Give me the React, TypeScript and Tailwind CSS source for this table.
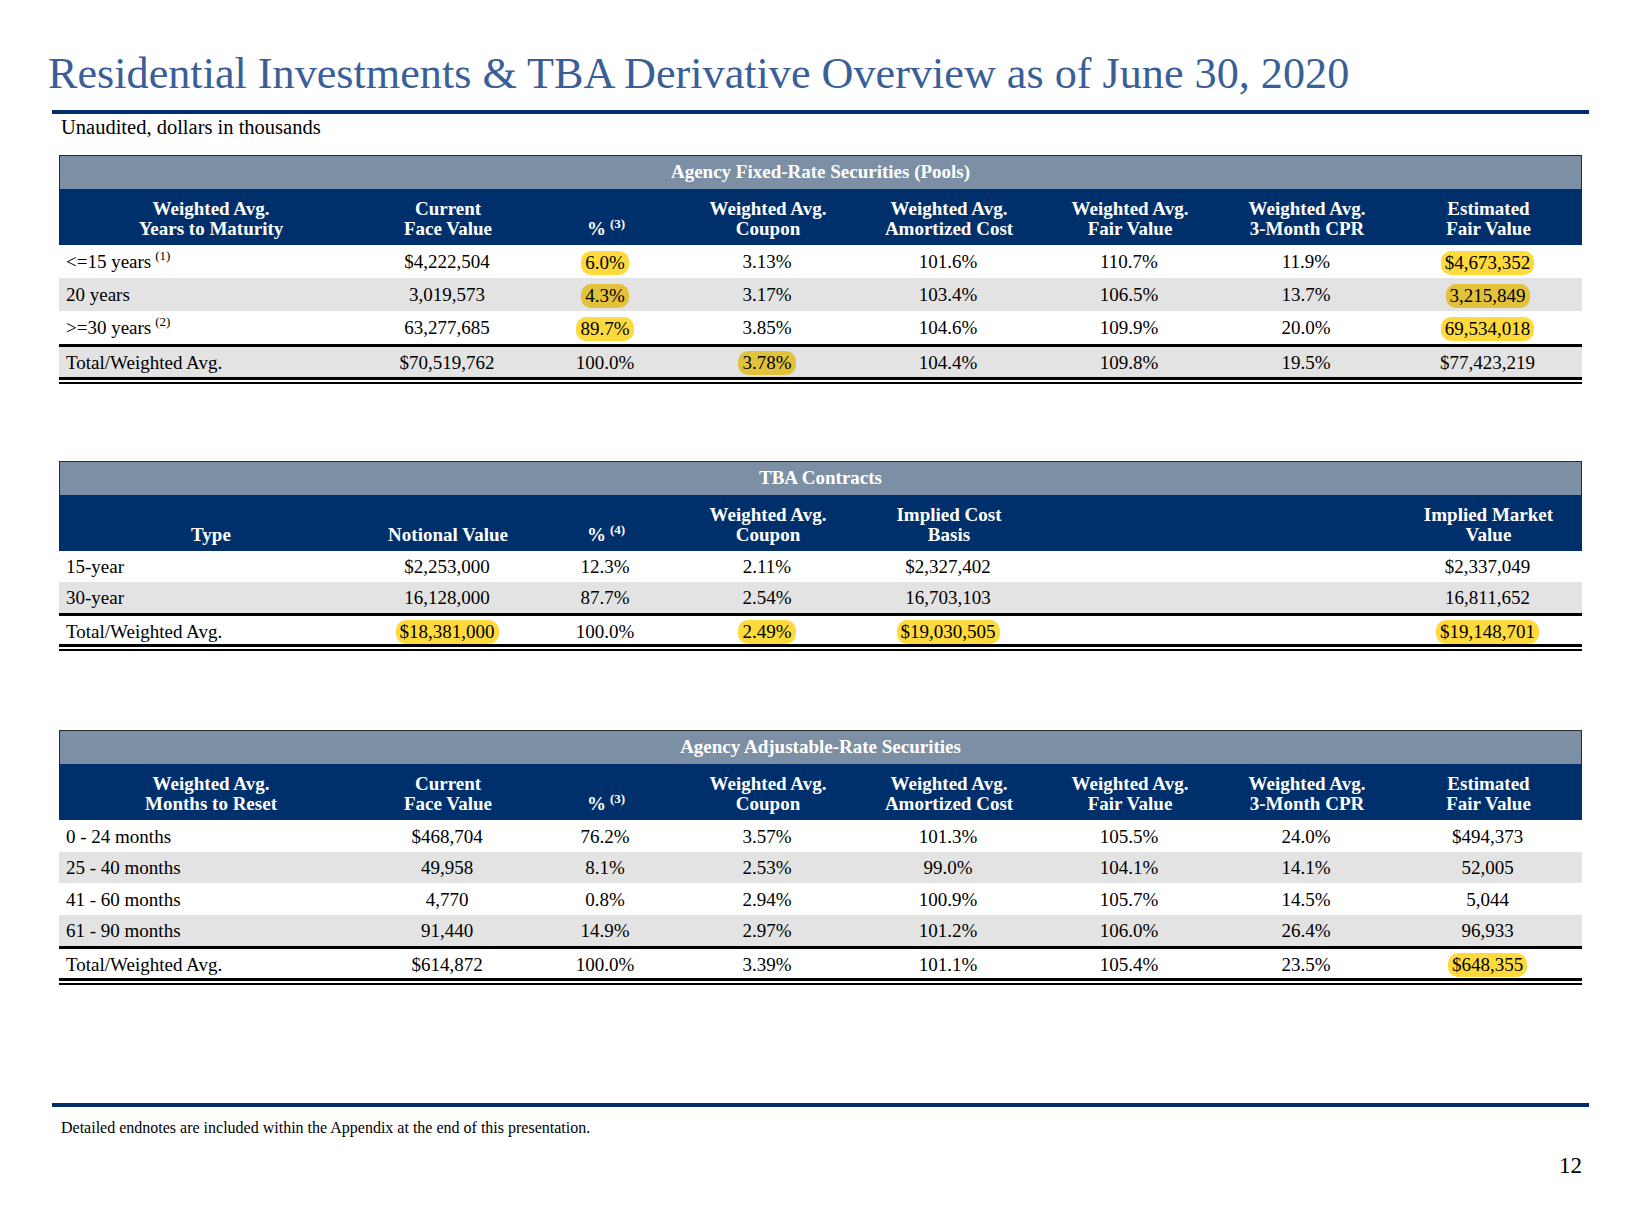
import React from 'react';

const grid = 'grid grid-cols-[302px_172px_144px_180px_182px_180px_174px_189px]';

type Cell = React.ReactNode;

const Hi: React.FC<{ dark?: boolean; children: React.ReactNode }> = ({ dark, children }) => (
  <span
    className={
      dark
        ? 'inline-block rounded-[10px] bg-[#E2C23B] px-[4px] leading-[24px]'
        : 'inline-block rounded-[10px] bg-[#FFDA3C] px-[4px] leading-[24px]'
    }
  >
    {children}
  </span>
);

const Sup: React.FC<{ children: React.ReactNode }> = ({ children }) => (
  <sup className="ml-[4px] text-[13px] top-[-7px]">{children}</sup>
);

const HeadRow: React.FC<{ labels: Cell[] }> = ({ labels }) => (
  <div className={`${grid} h-[56px] bg-[#00306B] border-x border-[#2a2a2a] text-white font-bold text-[19px] leading-[20px]`}>
    {labels.map((label, i) => (
      <div key={i} className="flex items-end justify-center text-center pb-[6px]">
        <span>{label}</span>
      </div>
    ))}
  </div>
);

const DataRow: React.FC<{ cells: Cell[]; gray?: boolean; h: string }> = ({ cells, gray, h }) => (
  <div className={`${grid} ${h} ${gray ? 'bg-[#E3E3E3]' : 'bg-white'} text-[19px] text-black`}>
    {cells.map((c, i) => (
      <div key={i} className={i === 0 ? 'flex items-center pl-[7px] pt-[2px]' : 'flex items-center justify-center pt-[2px]'}>
        {c}
      </div>
    ))}
  </div>
);

interface TableProps {
  title: string;
  headers: Cell[];
  rows: Cell[][];
  total: Cell[];
  rowH: string;
  totalH: string;
  mt: string;
}

const Table: React.FC<TableProps> = ({ title, headers, rows, total, rowH, totalH, mt }) => (
  <div className={`ml-[59px] w-[1523px] ${mt}`}>
    <div className="h-[34px] bg-[#7C8FA4] border-t border-x border-[#2a2a2a] flex items-center justify-center text-white font-bold text-[19px]">
      {title}
    </div>
    <HeadRow labels={headers} />
    {rows.map((r, i) => (
      <DataRow key={i} cells={r} gray={i % 2 === 1} h={rowH} />
    ))}
    <div className="border-t-[3px] border-black">
      <DataRow cells={total} gray={rows.length % 2 === 1} h={totalH} />
    </div>
    <div className="h-[3px] bg-black" />
    <div className="h-[2px]" />
    <div className="h-[2px] bg-black" />
  </div>
);

export default function App() {
  const two = (a: string, b: string) => (
    <>
      {a}
      <br />
      {b}
    </>
  );

  return (
    <div className="w-[1640px] h-[1206px] bg-white flex flex-col font-['Liberation_Serif',serif] overflow-hidden">
      <h1 className="ml-[48px] mt-[52px] text-[44.2px] leading-[44px] text-[#395E98] whitespace-nowrap">
        Residential Investments &amp; TBA Derivative Overview as of June 30, 2020
      </h1>
      <div className="ml-[52px] mt-[14px] w-[1537px] h-[4px] bg-[#00306B]" />
      <p className="ml-[61px] mt-[1px] text-[20.5px] leading-[24px] text-black">Unaudited, dollars in thousands</p>

      <Table
        mt="mt-[16px]"
        title="Agency Fixed-Rate Securities (Pools)"
        headers={[
          two('Weighted Avg.', 'Years to Maturity'),
          two('Current', 'Face Value'),
          <>%<Sup>(3)</Sup></>,
          two('Weighted Avg.', 'Coupon'),
          two('Weighted Avg.', 'Amortized Cost'),
          two('Weighted Avg.', 'Fair Value'),
          two('Weighted Avg.', '3-Month CPR'),
          two('Estimated', 'Fair Value'),
        ]}
        rowH="h-[33px]"
        totalH="h-[30px]"
        rows={[
          [<>&lt;=15 years<Sup>(1)</Sup></>, '$4,222,504', <Hi>6.0%</Hi>, '3.13%', '101.6%', '110.7%', '11.9%', <Hi>$4,673,352</Hi>],
          ['20 years', '3,019,573', <Hi dark>4.3%</Hi>, '3.17%', '103.4%', '106.5%', '13.7%', <Hi dark>3,215,849</Hi>],
          [<>&gt;=30 years<Sup>(2)</Sup></>, '63,277,685', <Hi>89.7%</Hi>, '3.85%', '104.6%', '109.9%', '20.0%', <Hi>69,534,018</Hi>],
        ]}
        total={['Total/Weighted Avg.', '$70,519,762', '100.0%', <Hi dark>3.78%</Hi>, '104.4%', '109.8%', '19.5%', '$77,423,219']}
      />

      <Table
        mt="mt-[77px]"
        title="TBA Contracts"
        headers={[
          'Type',
          'Notional Value',
          <>%<Sup>(4)</Sup></>,
          two('Weighted Avg.', 'Coupon'),
          two('Implied Cost', 'Basis'),
          '',
          '',
          two('Implied Market', 'Value'),
        ]}
        rowH="h-[31px]"
        totalH="h-[28px]"
        rows={[
          ['15-year', '$2,253,000', '12.3%', '2.11%', '$2,327,402', '', '', '$2,337,049'],
          ['30-year', '16,128,000', '87.7%', '2.54%', '16,703,103', '', '', '16,811,652'],
        ]}
        total={['Total/Weighted Avg.', <Hi>$18,381,000</Hi>, '100.0%', <Hi>2.49%</Hi>, <Hi>$19,030,505</Hi>, '', '', <Hi>$19,148,701</Hi>]}
      />

      <Table
        mt="mt-[79px]"
        title="Agency Adjustable-Rate Securities"
        headers={[
          two('Weighted Avg.', 'Months to Reset'),
          two('Current', 'Face Value'),
          <>%<Sup>(3)</Sup></>,
          two('Weighted Avg.', 'Coupon'),
          two('Weighted Avg.', 'Amortized Cost'),
          two('Weighted Avg.', 'Fair Value'),
          two('Weighted Avg.', '3-Month CPR'),
          two('Estimated', 'Fair Value'),
        ]}
        rowH="h-[31.5px]"
        totalH="h-[29px]"
        rows={[
          ['0 - 24 months', '$468,704', '76.2%', '3.57%', '101.3%', '105.5%', '24.0%', '$494,373'],
          ['25 - 40 months', '49,958', '8.1%', '2.53%', '99.0%', '104.1%', '14.1%', '52,005'],
          ['41 - 60 months', '4,770', '0.8%', '2.94%', '100.9%', '105.7%', '14.5%', '5,044'],
          ['61 - 90 months', '91,440', '14.9%', '2.97%', '101.2%', '106.0%', '26.4%', '96,933'],
        ]}
        total={['Total/Weighted Avg.', '$614,872', '100.0%', '3.39%', '101.1%', '105.4%', '23.5%', <Hi>$648,355</Hi>]}
      />

      {/* Footer */}
      <div className="ml-[52px] mt-[118px] w-[1537px] h-[4px] bg-[#00306B]" />
      <p className="ml-[61px] mt-[12px] text-[16px] leading-[18px] text-black">
        Detailed endnotes are included within the Appendix at the end of this presentation.
      </p>
      <div className="mt-[16px] pr-[58px] text-right text-[23px] leading-[26px] text-black">12</div>
    </div>
  );
}
